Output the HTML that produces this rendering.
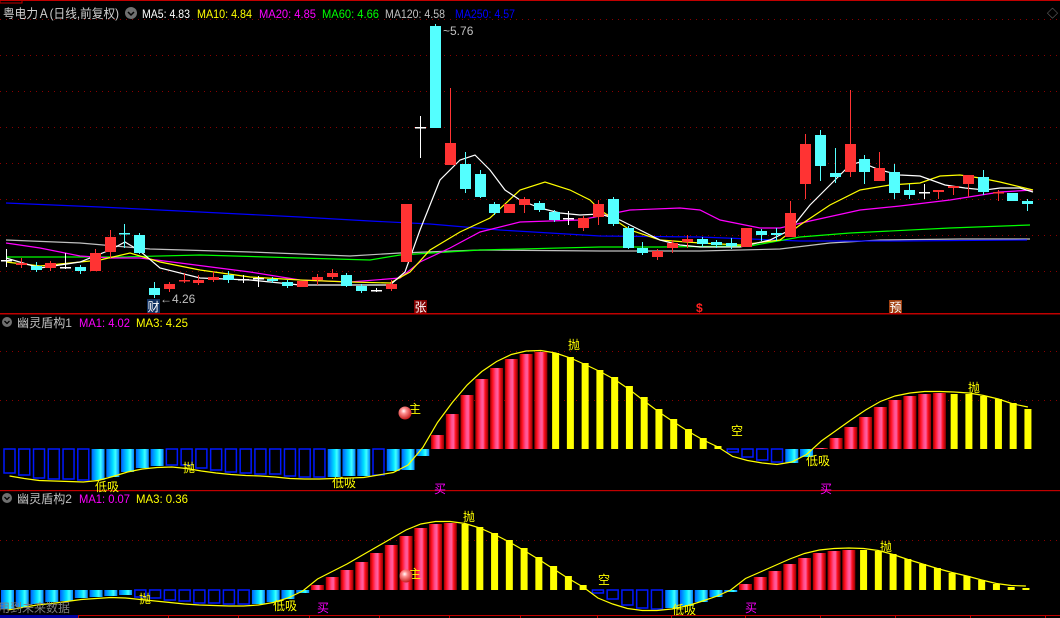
<!DOCTYPE html>
<html><head><meta charset="utf-8">
<style>
html,body{margin:0;padding:0;background:#000;width:1060px;height:618px;overflow:hidden}
svg{display:block}
text{font-family:"Liberation Sans","Noto Sans CJK SC",sans-serif}
</style></head>
<body>
<svg id="s" width="1060" height="618" viewBox="0 0 1060 618" xmlns="http://www.w3.org/2000/svg">
<defs>
<linearGradient id="gr" x1="0" x2="1" y1="0" y2="0">
<stop offset="0" stop-color="#a00000"/><stop offset="0.2" stop-color="#ff1020"/><stop offset="0.45" stop-color="#ff5090"/><stop offset="0.6" stop-color="#ff60a0"/><stop offset="0.75" stop-color="#ff1020"/><stop offset="1" stop-color="#900000"/>
</linearGradient>
<linearGradient id="gc" x1="0" x2="1" y1="0" y2="0">
<stop offset="0" stop-color="#0060ff"/><stop offset="0.5" stop-color="#00e0ff"/><stop offset="0.7" stop-color="#40ffff"/><stop offset="1" stop-color="#0080ff"/>
</linearGradient>
<radialGradient id="ball" cx="0.4" cy="0.35" r="0.7">
<stop offset="0" stop-color="#ffffff"/><stop offset="0.3" stop-color="#ff9090"/><stop offset="1" stop-color="#c01010"/>
</radialGradient>
</defs>
<g id="g"></g>
<rect x="0" y="0" width="1060" height="1" fill="#c00000"/>
<rect x="0" y="0" width="22" height="3" fill="none" stroke="#c00000" stroke-width="1"/>
<text x="3" y="18" font-size="12.5" fill="#d0d0d0" textLength="116" lengthAdjust="spacingAndGlyphs">粤电力Ａ(日线,前复权)</text>
<circle cx="131" cy="13" r="6" fill="#707070"/><path d="M128 12 L131 15 L134 12" stroke="#000" stroke-width="1.5" fill="none"/>
<text x="142" y="18" font-size="12" fill="#ffffff" textLength="48" lengthAdjust="spacingAndGlyphs">MA5: 4.83</text>
<text x="197" y="18" font-size="12" fill="#ffff00" textLength="55" lengthAdjust="spacingAndGlyphs">MA10: 4.84</text>
<text x="259" y="18" font-size="12" fill="#ff00ff" textLength="57" lengthAdjust="spacingAndGlyphs">MA20: 4.85</text>
<text x="322" y="18" font-size="12" fill="#00ff00" textLength="57" lengthAdjust="spacingAndGlyphs">MA60: 4.66</text>
<text x="385" y="18" font-size="12" fill="#c0c0c0" textLength="60" lengthAdjust="spacingAndGlyphs">MA120: 4.58</text>
<text x="455" y="18" font-size="12" fill="#0000ff" textLength="60" lengthAdjust="spacingAndGlyphs">MA250: 4.57</text>
<text x="1047" y="17" font-size="11" fill="#808080">◇</text>
<text x="443" y="35" font-size="12" fill="#c0c0c0">~5.76</text>
<text x="160" y="303" font-size="12" fill="#c0c0c0">←4.26</text>
<rect x="147" y="299" width="13" height="14" fill="#103060"/><text x="147.5" y="311" font-size="12" fill="#fff">财</text>
<rect x="414" y="300" width="13" height="13" fill="#800000"/><text x="414.5" y="311.5" font-size="12" fill="#fff">张</text>
<text x="696" y="312" font-size="12" fill="#ff2020" font-weight="bold">$</text>
<rect x="889" y="300" width="13" height="13" fill="#a04010"/><text x="889.5" y="311.5" font-size="12" fill="#fff">预</text>

<circle cx="7" cy="322" r="5" fill="#707070"/><path d="M4.5 321 L7 323.5 L9.5 321" stroke="#000" stroke-width="1.3" fill="none"/>
<text x="17" y="327" font-size="12" fill="#c0c0c0" textLength="55" lengthAdjust="spacingAndGlyphs">幽灵盾构1</text>
<text x="79" y="327" font-size="12" fill="#ff00ff" textLength="51" lengthAdjust="spacingAndGlyphs">MA1: 4.02</text>
<text x="136" y="327" font-size="12" fill="#ffff00" textLength="52" lengthAdjust="spacingAndGlyphs">MA3: 4.25</text>

<circle cx="7" cy="498" r="5" fill="#707070"/><path d="M4.5 497 L7 499.5 L9.5 497" stroke="#000" stroke-width="1.3" fill="none"/>
<text x="17" y="503" font-size="12" fill="#c0c0c0" textLength="55" lengthAdjust="spacingAndGlyphs">幽灵盾构2</text>
<text x="79" y="503" font-size="12" fill="#ff00ff" textLength="51" lengthAdjust="spacingAndGlyphs">MA1: 0.07</text>
<text x="136" y="503" font-size="12" fill="#ffff00" textLength="52" lengthAdjust="spacingAndGlyphs">MA3: 0.36</text>
</svg>
<script>
var NS="http://www.w3.org/2000/svg",G=document.getElementById('g');
function el(t,a,txt){var e=document.createElementNS(NS,t);for(var k in a)e.setAttribute(k,a[k]);if(txt)e.textContent=txt;G.appendChild(e);return e;}
[19,55,91,127,163,199,235,271].forEach(function(y){el('line',{x1:0,x2:1060,y1:y+.5,y2:y+.5,stroke:'#8a0000','stroke-dasharray':'1,5'});});
[351,400].forEach(function(y){el('line',{x1:0,x2:1060,y1:y+.5,y2:y+.5,stroke:'#8a0000','stroke-dasharray':'1,5'});});
el('line',{x1:0,x2:1060,y1:540.5,y2:540.5,stroke:'#8a0000','stroke-dasharray':'1,5'});
el('rect',{x:0,y:313,width:1060,height:1.5,fill:'#c00000'});
el('rect',{x:0,y:490,width:1060,height:1.2,fill:'#c00000'});
el('rect',{x:0,y:615,width:1060,height:1,fill:'#c00000'});
el('rect',{x:0,y:615,width:78,height:3,fill:'#0000a0'});
[78,168,238,309,379,449,520,597,671,745,820,895,970,1045].forEach(function(x){el('rect',{x:x,y:615,width:1,height:3,fill:'#c00000'});});
function pl(p,c){el('polyline',{points:p,fill:'none',stroke:c,'stroke-width':1.2});}
pl("6,240 80,243 150,249 250,252 350,256 400,253 480,250 600,251 700,251 780,249 830,243 880,240 960,239 1030,239",'#c0c0c0');
pl("6,203 100,207 200,212 300,217 370,221 430,224 500,230 600,236 700,237 800,241 900,241 1027,240",'#0000ff');
pl("6,257 120,257 200,255 300,258 370,260 400,255 480,250 600,247 660,247 750,246 800,237 850,233 950,228 1030,225",'#00ff00');
pl("6,243 40,248 80,256 110,258 140,258 180,263 250,272 300,280 350,282 400,278 420,262 450,248 480,232 520,222 580,220 630,210 680,208 700,210 720,220 760,228 780,228 810,221 860,210 900,206 950,200 1000,192 1033,190",'#ff00ff');
pl("6,262 40,266 100,260 130,253 160,262 200,270 250,277 300,280 350,282 390,283 410,272 430,250 460,232 490,218 520,190 545,182 570,190 590,200 600,210 630,230 660,240 700,243 740,245 780,240 800,225 830,205 860,190 890,185 920,183 940,176 960,175 980,178 1000,182 1033,190",'#ffff00');
pl("6,258 40,268 80,262 110,250 125,242 140,251 160,268 200,278 250,280 300,285 350,285 390,285 405,272 420,230 440,180 460,160 475,155 490,170 505,190 520,200 540,208 560,213 580,215 600,214 620,220 640,230 660,240 680,245 700,247 740,247 770,240 790,230 810,205 830,185 850,165 860,162 880,170 900,175 920,176 945,185 965,188 985,190 1000,188 1020,188 1033,192",'#ffffff');
var C=[[260,260,249,267,'w'],[263,265,258,268,'r'],[266,270,262,272,'c'],[263,268,261,271,'r'],[267,267,253,269,'w'],[267,271,265,274,'c'],[253,271,249,271,'r'],[237,252,230,258,'r'],[233,234,224,248,'c'],[235,253,233,254,'c'],[288,295,282,298,'c'],[284,289,282,292,'r'],[280,281,273,283,'r'],[280,283,275,285,'r'],[277,280,271,282,'r'],[275,280,271,283,'c'],[279,279,275,283,'w'],[278,278,276,287,'w'],[279,281,277,283,'c'],[282,286,280,288,'c'],[281,287,281,287,'r'],[277,280,274,285,'r'],[273,277,269,279,'r'],[275,286,273,287,'c'],[286,291,284,293,'c'],[290,290,288,292,'w'],[284,289,280,291,'r'],[204,262,204,262,'r'],[127,127,116,158,'w'],[26,128,24,128,'c'],[143,165,88,165,'r'],[164,189,152,193,'c'],[174,197,170,198,'c'],[204,213,202,215,'c'],[204,213,204,213,'r'],[199,205,197,213,'r'],[203,210,201,212,'c'],[212,220,210,222,'c'],[218,218,211,225,'w'],[218,228,216,231,'r'],[204,217,200,225,'r'],[199,224,197,226,'c'],[228,248,226,249,'c'],[248,253,242,255,'c'],[251,257,249,260,'r'],[243,248,240,253,'r'],[239,242,235,248,'r'],[239,244,237,247,'c'],[242,245,240,248,'c'],[243,246,238,249,'c'],[228,247,228,247,'r'],[231,235,229,241,'c'],[233,235,228,241,'c'],[213,237,201,237,'r'],[144,184,134,199,'r'],[135,166,130,181,'c'],[173,177,148,183,'c'],[144,172,90,177,'r'],[159,172,155,184,'c'],[168,181,152,181,'r'],[172,193,164,199,'c'],[190,195,184,199,'c'],[192,192,184,199,'w'],[190,192,190,199,'r'],[186,188,186,195,'r'],[175,184,175,197,'r'],[177,192,170,195,'c'],[192,192,190,201,'r'],[193,201,193,201,'c'],[201,204,199,211,'c']];
var col={r:'#ff3333',c:'#54ffff',w:'#ffffff'};
C.forEach(function(d,i){var cx=Math.round(6+i*14.8)+.5,f=col[d[4]];
 el('line',{x1:cx,x2:cx,y1:d[2],y2:d[3],stroke:f,'stroke-width':1});
 var t=Math.min(d[0],d[1]),h=Math.max(1.5,Math.abs(d[1]-d[0]));
 if(d[0]==d[1]) el('rect',{x:cx-5.5,y:t,width:11,height:1.5,fill:f});
 else el('rect',{x:cx-5.5,y:t,width:11,height:h,fill:f});
});
function panel(start,base,v,ty){
 var pts=[];
 v.forEach(function(y,i){var x=start+i*14.76,t=ty[i];
  if(t=='o'){el('rect',{x:x+1,y:base,width:11,height:y-base,fill:'none',stroke:'#0018ff','stroke-width':1.5});}
  else if(t=='c'){el('rect',{x:x,y:base,width:13,height:y-base,fill:'url(#gc)'});}
  else if(t=='r'){el('rect',{x:x,y:y,width:13,height:base-y,fill:'url(#gr)'});}
  else {el('rect',{x:x+3,y:y,width:7,height:base-y,fill:'#ffff00'});}
  var n=v[Math.min(i+1,v.length-1)];
  var ly=(y+n)/2+(y>base?2:-2);
  pts.push((x+6.5).toFixed(1)+','+ly.toFixed(1));
 });
 el('polyline',{points:pts.join(' '),fill:'none',stroke:'#ffff00','stroke-width':1.2});
}
function mk(spec){var v=[],t=[];spec.forEach(function(s){s[1].forEach(function(y){v.push(y);t.push(s[0]);});});return [v,t];}
var p1=mk([['o',[473,475,478,479,479,480]],['c',[480,477,472,468,466]],['o',[465,465,468,470,472,473,474,474,476,477,477]],['c',[477,476,476]],['o',[475]],['c',[471,470,456]],['r',[435,414,395,379,368,359,354,352]],['y',[353,357,363,370,377,386,397,409,419,429,438,446]],['o',[452,457,460,462]],['c',[463,457]],['r',[448,438,427,417,407,400,396,394,393]],['y',[394,394,396,399,403,409]]]);
panel(3,449,p1[0],p1[1]);
var p2=mk([['c',[609,607,604,602,601,598,597,596,595]],['o',[597,598,600,601,603,603,604,604]],['c',[604,602,599,593]],['r',[585,577,570,562,553,545,536,528,524,523]],['y',[524,527,533,540,548,557,566,576,585]],['o',[593,599,605,608,609]],['c',[608,606,602,597,592]],['r',[584,577,571,564,558,553,551,550]],['y',[550,551,554,559,564,568,573,576,580,584,587,588]]]);
panel(1,590,p2[0],p2[1]);
function tx(x,y,s,c){el('text',{x:x,y:y,'font-size':12,fill:c||'#ffff00'},s);}
tx(95,491,'低吸');tx(183,472,'抛');tx(332,487,'低吸');tx(434,493,'买','#ff00ff');tx(568,349,'抛');tx(731,435,'空');tx(806,465,'低吸');tx(820,493,'买','#ff00ff');tx(968,392,'抛');
tx(409,413,'主');el('circle',{cx:405,cy:413,r:6.5,fill:'url(#ball)'});
tx(463,521,'抛');tx(409,578,'主');el('circle',{cx:406,cy:576,r:6.5,fill:'url(#ball)'});tx(598,584,'空');tx(139,603,'抛');tx(273,610,'低吸');tx(317,612,'买','#ff00ff');tx(672,614,'低吸');tx(745,612,'买','#ff00ff');tx(880,551,'抛');
el('text',{x:-2,y:612,'font-size':12,fill:'#808080'},'用到未来数据');
</script>
</body></html>
